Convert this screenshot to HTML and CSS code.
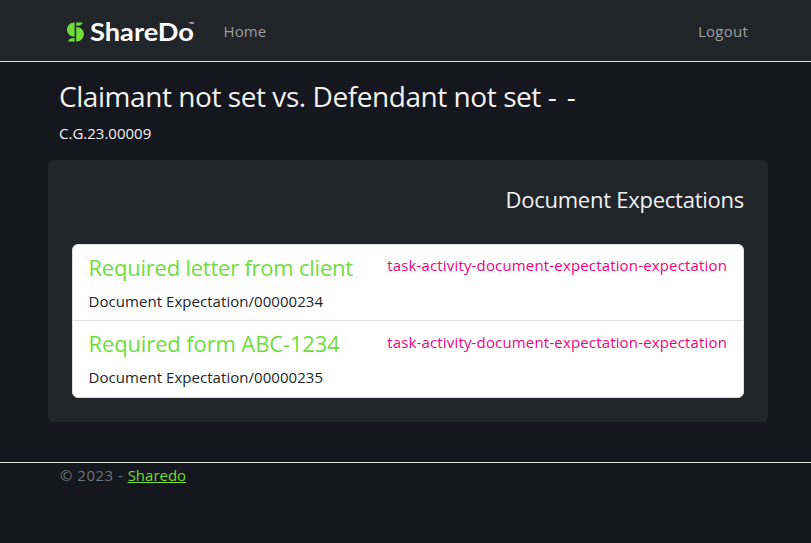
FILE: index.html
```html
<!DOCTYPE html>
<html lang="en">
<head>
<meta charset="utf-8">
<title>Sharedo</title>
<link rel="stylesheet" href="styles.css">
</head>
<body>
<header class="navbar">
  <div class="container nav-inner">
    <a class="brand" href="#" aria-label="ShareDo">
      <svg width="130" height="36" viewBox="0 -6 130 36">
        <g fill="#6fdc3c">
          <path d="M8.600 2.400V16.800C4 16.800 1 13.600 1 9.600S4 2.400 8.600 2.400Z"/>
          <path d="M10.200 7C14.800 7 17.800 10.200 17.800 14.200S14.800 21.400 10.200 21.400Z"/>
          <path d="M10.200 2.400H16.800C16 4.600 14 5.800 10.200 5.800Z"/>
          <path d="M8.600 21.400H2C2.800 19.200 4.800 18 8.600 18Z"/>
        </g>
        <text class="wordmark" x="24" y="21" textLength="104" lengthAdjust="spacingAndGlyphs">ShareDo</text>
        <text class="mark" x="122.800" y="6.500" textLength="5">™</text>
      </svg>
    </a>
    <a class="nav-link home" href="#">Home</a>
    <a class="nav-link logout" href="#">Logout</a>
  </div>
</header>
<main class="container">
  <div class="heading">
    <h2>Claimant not set vs. Defendant not set <span class="dashes">- -</span></h2>
    <p>C.G.23.00009</p>
  </div>
  <section class="panel">
    <h4 class="panel-title">Document Expectations</h4>
    <ul class="list">
      <li class="item">
        <div class="item-main"><h4 class="item-title letter">Required letter from client</h4><p>Document Expectation/00000234</p></div>
        <code>task-activity-document-expectation-expectation</code>
      </li>
      <li class="item">
        <div class="item-main"><h4 class="item-title form">Required form ABC-1234</h4><p>Document Expectation/00000235</p></div>
        <code>task-activity-document-expectation-expectation</code>
      </li>
    </ul>
  </section>
</main>
<footer class="footer">
  <div class="container foot-inner"><span class="copyright">© 2023 - </span><a href="#">Sharedo</a></div>
</footer>
</body>
</html>
```
FILE: styles.css
```css
* { box-sizing: border-box; }
body { margin: 0; min-height: 543px; background: #15161e; color: #f2f2f2; font: 15px/24px "Open Sans", "Noto Sans", sans-serif; }
h2, h4, p, ul { margin: 0; padding: 0; font-weight: 400; }
.container { width: 720px; margin-left: 48px; }
.navbar { height: 62px; background: #212529; border-bottom: 1px solid #dee2e6; }
.nav-inner { display: flex; align-items: center; height: 61px; padding: 0 20px 0 18px; }
.brand { display: block; height: 36px; margin-right: 27.5px; padding-top: 1px; }
.brand svg { display: block; overflow: visible; }
.wordmark { fill: #fff; font: 700 25.5px Lato, sans-serif; }
.mark { fill: #fff; font: 7px Lato, sans-serif; }
.nav-link { color: #9b9d9f; text-decoration: none; letter-spacing: .1px; }
.logout { margin-left: auto; letter-spacing: .25px; }
.heading { height: 98px; padding: 16px 11px 0; }
.heading h2 { font-size: 28px; line-height: 36px; letter-spacing: -.44px; white-space: nowrap; }
.dashes { letter-spacing: 1.4px; }
.heading p { margin-top: 7px; }
.panel { height: 262px; padding: 24px; background: #212529; border-radius: 6px; }
.panel-title { height: 60px; font-size: 22px; line-height: 31px; letter-spacing: -.25px; text-align: right; }
.list { list-style: none; border: 1px solid #dfdfdf; border-radius: 6px; background: #fff; color: #212529; }
.item { display: flex; justify-content: space-between; height: 75px; padding: 7px 16px 8px; }
.item + .item { height: 77px; border-top: 1px solid #dfdfdf; }
.item-main { margin-left: -.5px; }
.item-title { margin-bottom: 6px; color: #6fdc3c; font-size: 22px; line-height: 31px; white-space: nowrap; }
.letter { letter-spacing: -.23px; }
.form { letter-spacing: -.13px; }
.item p { letter-spacing: .05px; white-space: nowrap; }
.item code { padding-top: 1px; color: #f0047f; font: inherit; letter-spacing: .16px; white-space: nowrap; }
.item + .item code { padding-top: 2px; }
.footer { margin-top: 40px; border-top: 1px solid #e5e5e5; color: #6c757d; }
.foot-inner { padding: 0 12px; }
.copyright { letter-spacing: .48px; }
.foot-inner a { color: #6fdc3c; }
```
